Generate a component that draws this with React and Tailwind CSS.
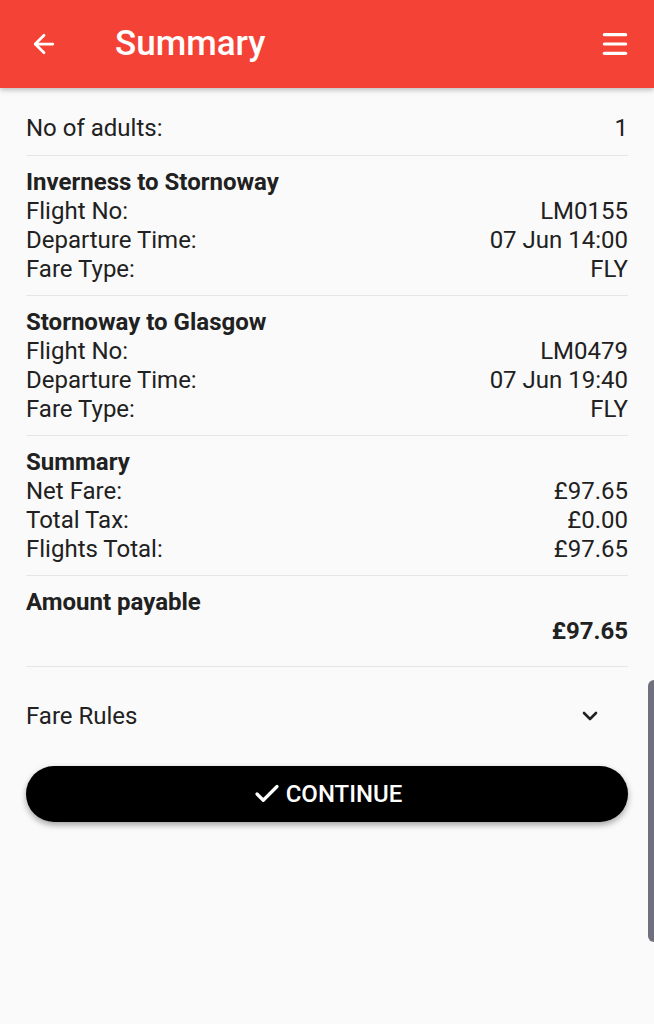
import { ArrowLeft, Menu, ChevronDown, Check } from "lucide-react";

const flights = [
  { route: "Inverness to Stornoway", no: "LM0155", time: "07 Jun 14:00", fare: "FLY" },
  { route: "Stornoway to Glasgow", no: "LM0479", time: "07 Jun 19:40", fare: "FLY" },
];

function Row({ label, value }) {
  return (
    <div className="flex justify-between">
      <span>{label}</span>
      <span>{value}</span>
    </div>
  );
}

export default function App() {
  return (
    <main
      className="relative min-h-[1024px] bg-[#fafafa] text-[#212121] text-[24px] leading-[29px]"
      style={{ fontFamily: "Roboto, 'Noto Sans', sans-serif" }}
    >
      {/* Toolbar */}
      <header className="h-[88px] bg-[#f44336] text-white flex items-center pl-[29px] pr-[23px] shadow-[0_2px_5px_rgba(0,0,0,0.25)]">
        <ArrowLeft className="w-[30px] h-[30px]" strokeWidth={2.2} />
        <h1 className="ml-[56px] text-[35px] leading-[40px] font-medium">Summary</h1>
        <Menu className="ml-auto w-[32px] h-[32px]" strokeWidth={2.4} />
      </header>

      <div className="px-[26px] pt-[14px]">
        <div className="py-3 border-b border-[#e6e6e6]">
          <Row label="No of adults:" value="1" />
        </div>

        {flights.map((f) => (
          <div key={f.no} className="pt-[12px] pb-[11px] border-b border-[#e6e6e6]">
            <div className="font-bold">{f.route}</div>
            <Row label="Flight No:" value={f.no} />
            <Row label="Departure Time:" value={f.time} />
            <Row label="Fare Type:" value={f.fare} />
          </div>
        ))}

        <div className="pt-[12px] pb-[11px] border-b border-[#e6e6e6]">
          <div className="font-bold">Summary</div>
          <Row label="Net Fare:" value="£97.65" />
          <Row label="Total Tax:" value="£0.00" />
          <Row label="Flights Total:" value="£97.65" />
        </div>

        <div className="pt-[12px] pb-[20px] border-b border-[#e6e6e6]">
          <div className="font-bold">Amount payable</div>
          <div className="text-right font-bold">£97.65</div>
        </div>

        <div className="mt-[17px] h-[64px] flex items-center justify-between pr-[26px]">
          <span>Fare Rules</span>
          <ChevronDown className="w-[24px] h-[24px]" strokeWidth={2.6} />
        </div>

        <button className="mt-[18px] w-full h-[56px] rounded-full bg-black text-white flex items-center justify-center gap-[4px] font-medium text-[24px] shadow-[0_3px_6px_rgba(0,0,0,0.35)]">
          <Check className="w-[30px] h-[30px]" strokeWidth={2.6} />
          CONTINUE
        </button>
      </div>

      {/* scrollbar */}
      <div className="absolute right-0 top-[680px] w-[6px] h-[262px] rounded-l-md bg-[#6f6f7d]" />
    </main>
  );
}
